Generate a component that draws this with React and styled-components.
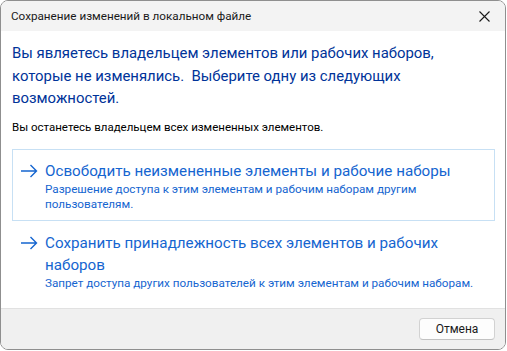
import React from "react";
import styled, { createGlobalStyle } from "styled-components";

const Global = createGlobalStyle`
  html, body { margin: 0; padding: 0; background: #ffffff; }
  body { font-family: Roboto, "Noto Sans", sans-serif; }
  * { box-sizing: border-box; }
`;

const Window = styled.div`
  width: 506px;
  height: 350px;
  border: 1px solid #8f8f8f;
  border-radius: 8px;
  overflow: hidden;
  display: flex;
  flex-direction: column;
  background: #ffffff;
`;

const TitleBar = styled.div`
  height: 30px;
  flex: none;
  background: #f3f3f3;
  display: flex;
  align-items: center;
  justify-content: space-between;
  padding: 0 9px 0 10px;
  font-size: 11.7px;
  color: #1a1a1a;
`;

const CloseBtn = styled.div`
  width: 24px;
  height: 24px;
  display: flex;
  align-items: center;
  justify-content: center;
`;

const Body = styled.div`
  flex: 1;
  min-height: 0;
  padding: 11px 10px 0 11px;
  display: flex;
  flex-direction: column;
  white-space: nowrap;
`;

const Heading = styled.div`
  font-size: 14.9px;
  line-height: 22.5px;
  color: #003399;
`;

const Note = styled.div`
  margin-top: 9px;
  font-size: 11.5px;
  line-height: 16px;
  color: #000;
`;

const Links = styled.div`
  margin-top: 14px;
  display: flex;
  flex-direction: column;
`;

const CommandLink = styled.div`
  display: flex;
  align-items: flex-start;
  gap: 7px;
  padding: 10px 8px 8px 7px;
  border: 1px solid ${(p) => (p.$focused ? "#c7e0f4" : "transparent")};
  color: #1565d0;
`;

const Arrow = styled.svg`
  flex: none;
  margin-top: 4px;
`;

const LinkText = styled.div`
  display: flex;
  flex-direction: column;
`;

const LinkTitle = styled.div`
  font-size: 15.2px;
  line-height: 22px;
`;

const LinkSub = styled.div`
  font-size: 11.7px;
  line-height: 15px;
`;

const Footer = styled.div`
  flex: none;
  height: 41px;
  background: #f0f0f0;
  border-top: 1px solid #e1e1e1;
  display: flex;
  justify-content: flex-end;
  align-items: flex-start;
  padding: 9px 10px 0 0;
`;

const Button = styled.button`
  width: 76px;
  height: 22px;
  background: #fdfdfd;
  border: 1px solid #d2d2d2;
  border-bottom-color: #c2c2c2;
  border-radius: 4px;
  font-family: inherit;
  font-size: 12px;
  color: #1a1a1a;
  padding: 0;
`;

const ArrowIcon = () => (
  <Arrow width="18" height="14" viewBox="0 0 18 14">
    <path d="M1 7 H16.5 M10.5 1 L16.5 7 L10.5 13" fill="none" stroke="#1565d0" strokeWidth="1.4" />
  </Arrow>
);

export default function App() {
  return (
    <>
      <Global />
      <Window>
        <TitleBar>
          <span>Сохранение изменений в локальном файле</span>
          <CloseBtn>
            <svg width="11" height="11" viewBox="0 0 11 11">
              <path d="M0.5 0.5 L10.5 10.5 M10.5 0.5 L0.5 10.5" stroke="#1a1a1a" strokeWidth="1.1" />
            </svg>
          </CloseBtn>
        </TitleBar>
        <Body>
          <Heading>
            Вы являетесь владельцем элементов или рабочих наборов,
            <br />
            которые не изменялись.&nbsp; Выберите одну из следующих
            <br />
            возможностей.
          </Heading>
          <Note>Вы останетесь владельцем всех измененных элементов.</Note>
          <Links>
            <CommandLink $focused>
              <ArrowIcon />
              <LinkText>
                <LinkTitle>Освободить неизмененные элементы и рабочие наборы</LinkTitle>
                <LinkSub>
                  Разрешение доступа к этим элементам и рабочим наборам другим
                  <br />
                  пользователям.
                </LinkSub>
              </LinkText>
            </CommandLink>
            <CommandLink>
              <ArrowIcon />
              <LinkText>
                <LinkTitle>
                  Сохранить принадлежность всех элементов и рабочих
                  <br />
                  наборов
                </LinkTitle>
                <LinkSub>Запрет доступа других пользователей к этим элементам и рабочим наборам.</LinkSub>
              </LinkText>
            </CommandLink>
          </Links>
        </Body>
        <Footer>
          <Button>Отмена</Button>
        </Footer>
      </Window>
    </>
  );
}
